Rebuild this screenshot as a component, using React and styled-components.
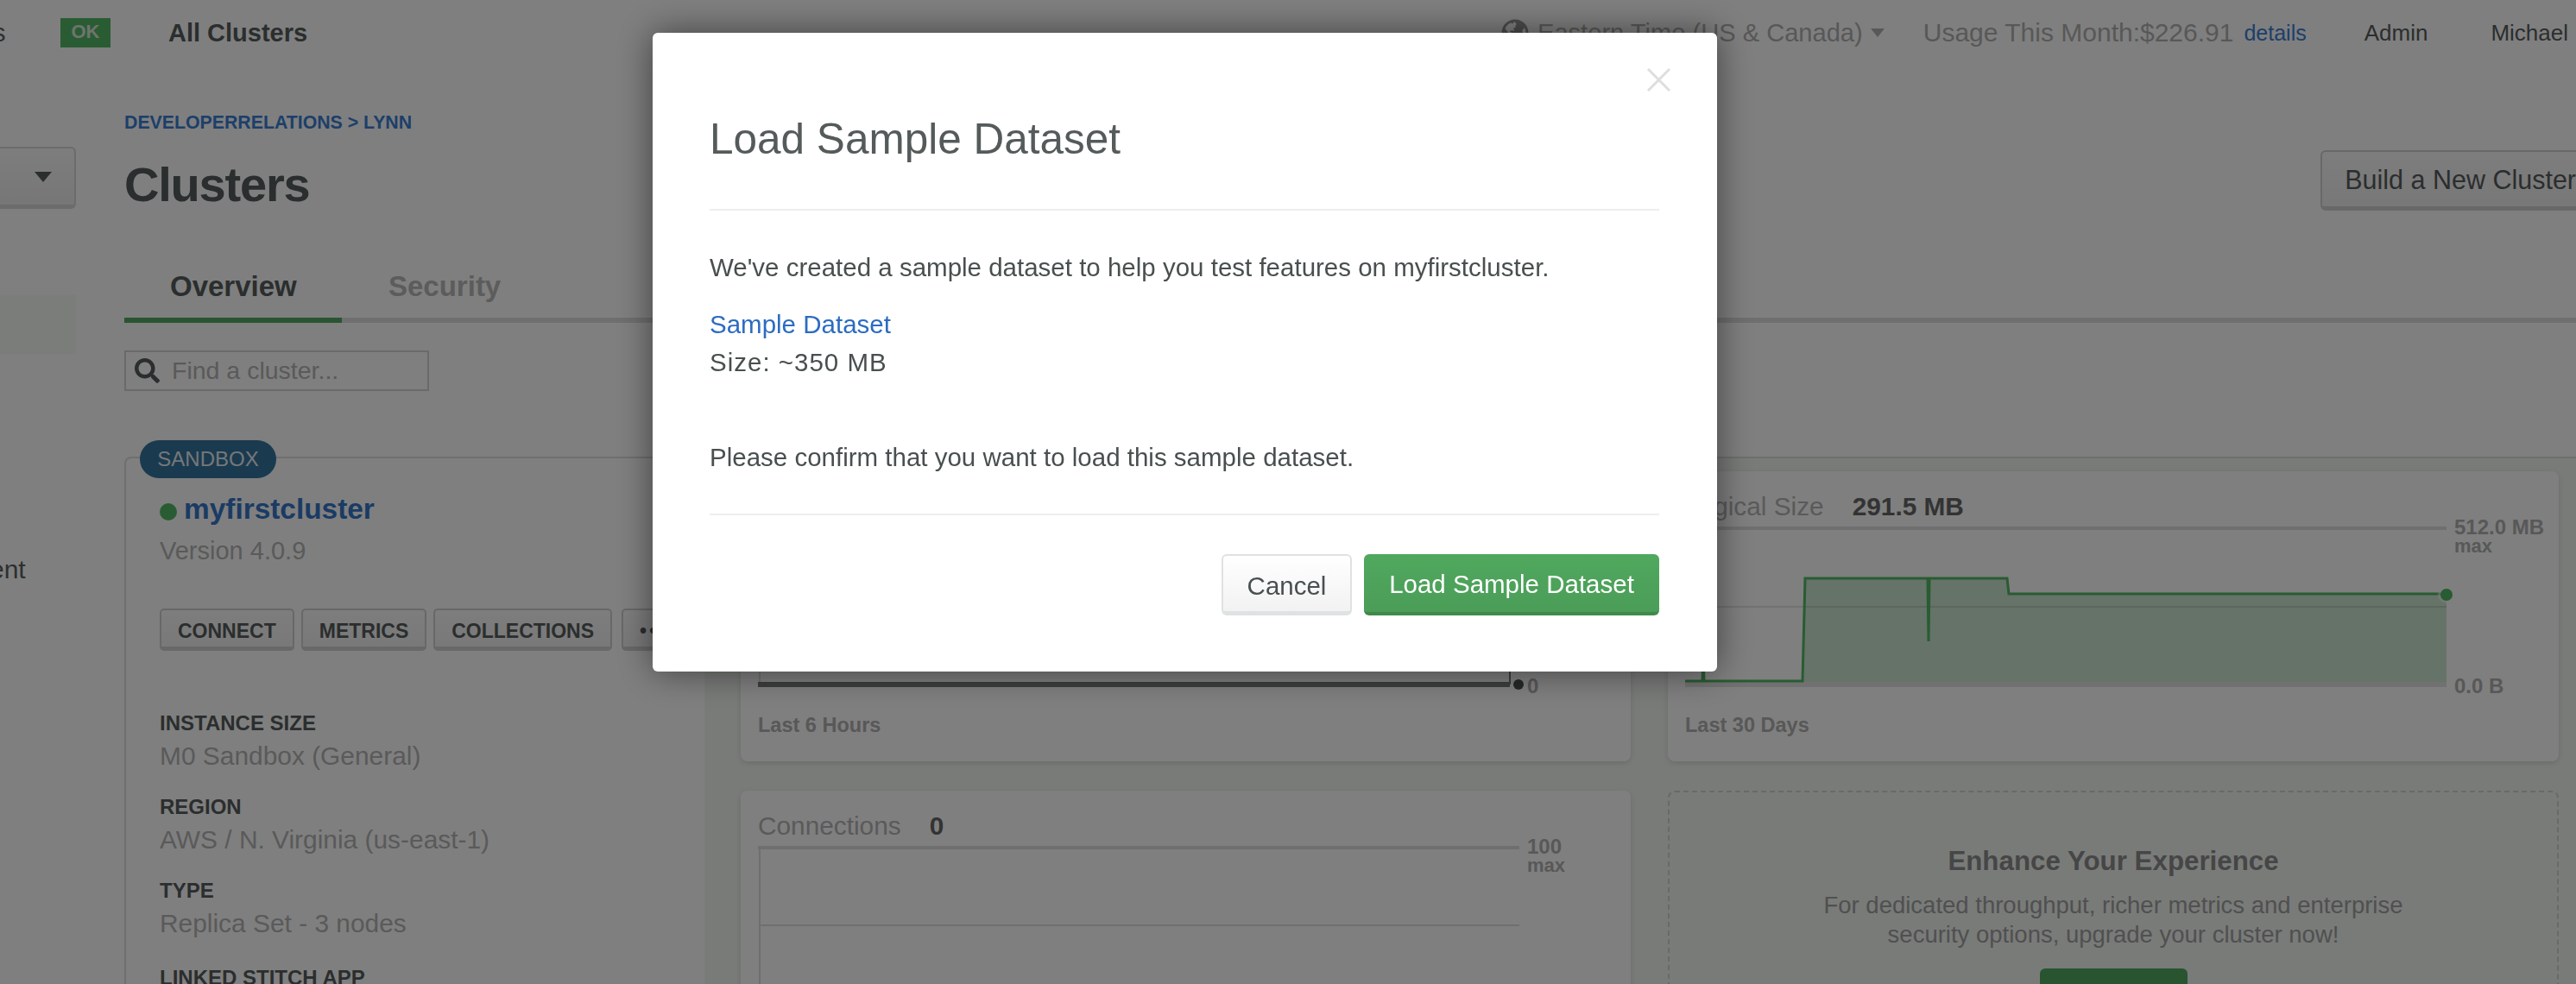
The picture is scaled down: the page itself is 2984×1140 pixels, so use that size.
import styled, { createGlobalStyle } from 'styled-components';
import { FaGlobeAmericas, FaSearch } from 'react-icons/fa';

const GlobalStyle = createGlobalStyle`
  html, body {
    margin: 0;
    background: #fff;
    font-family: "Liberation Sans", Arial, sans-serif;
    color: #5a6060;
  }
  * { box-sizing: border-box; }
`;

export default function App() {
  return (
    <Page>
      <GlobalStyle />

      <TopBar>
        <CutWord>s</CutWord>
        <StatusBadge>OK</StatusBadge>
        <ClusterLink>All Clusters</ClusterLink>
        <TopRight>
          <Globe><FaGlobeAmericas /></Globe>
          <TimeZone>Eastern Time (US &amp; Canada)</TimeZone>
          <SmallCaret />
          <Usage>Usage This Month:$226.91</Usage>
          <Details>details</Details>
          <UserLink $gap={67}>Admin</UserLink>
          <UserLink $gap={73}>Michael</UserLink>
        </TopRight>
      </TopBar>

      <Main>
        <Sidebar>
          <SideDropdown><Caret /></SideDropdown>
          <SideActive />
          <SideItem>ent</SideItem>
        </Sidebar>

        <Content>
          <Breadcrumb>DEVELOPERRELATIONS &gt; LYNN</Breadcrumb>
          <TitleRow>
            <Heading>Clusters</Heading>
            <BuildButton>Build a New Cluster</BuildButton>
          </TitleRow>

          <Tabs>
            <Tab $active>Overview</Tab>
            <Tab>Security</Tab>
          </Tabs>

          <SearchBox>
            <SearchIcon><FaSearch /></SearchIcon>
            <SearchText>Find a cluster...</SearchText>
          </SearchBox>

          <ClusterCard>
            <SandboxBadge>SANDBOX</SandboxBadge>
            <ClusterInfo>
              <ClusterName><StatusDot />myfirstcluster</ClusterName>
              <Version>Version 4.0.9</Version>
              <ActionRow>
                <ActionButton>CONNECT</ActionButton>
                <ActionButton>METRICS</ActionButton>
                <ActionButton>COLLECTIONS</ActionButton>
                <ActionButton $more>•••</ActionButton>
              </ActionRow>
              <InfoList>
                <InfoLabel>INSTANCE SIZE</InfoLabel>
                <InfoValue>M0 Sandbox (General)</InfoValue>
                <InfoLabel>REGION</InfoLabel>
                <InfoValue>AWS / N. Virginia (us-east-1)</InfoValue>
                <InfoLabel>TYPE</InfoLabel>
                <InfoValue $gap={31}>Replica Set - 3 nodes</InfoValue>
                <InfoLabel>LINKED STITCH APP</InfoLabel>
              </InfoList>
            </ClusterInfo>

            <MetricsPanel>
              <MetricCard label="Operations" value="0" top="100" unit="max" bottom="0" footer="Last 6 Hours">
                <EmptyChart closed />
              </MetricCard>
              <MetricCard label="Logical Size" value="291.5 MB" top="512.0 MB" unit="max" bottom="0.0 B" footer="Last 30 Days">
                <SizeChart />
              </MetricCard>
              <MetricCard label="Connections" value="0" top="100" unit="max">
                <EmptyChart />
              </MetricCard>
              <UpgradeCard>
                <UpgradeTitle>Enhance Your Experience</UpgradeTitle>
                <UpgradeText>
                  For dedicated throughput, richer metrics and enterprise
                  <br />
                  security options, upgrade your cluster now!
                </UpgradeText>
                <UpgradeButton>Upgrade</UpgradeButton>
              </UpgradeCard>
            </MetricsPanel>
          </ClusterCard>
        </Content>
      </Main>

      <Overlay>
        <Modal>
          <CloseIcon viewBox="0 0 27 27">
            <path d="M1 1 L26 26 M26 1 L1 26" />
          </CloseIcon>
          <ModalHeader>Load Sample Dataset</ModalHeader>
          <ModalBody>
            <ModalText>We've created a sample dataset to help you test features on myfirstcluster.</ModalText>
            <DatasetLink>Sample Dataset</DatasetLink>
            <SizeText>Size: ~350 MB</SizeText>
            <ConfirmText>Please confirm that you want to load this sample dataset.</ConfirmText>
          </ModalBody>
          <ModalFooter>
            <CancelButton>Cancel</CancelButton>
            <LoadButton>Load Sample Dataset</LoadButton>
          </ModalFooter>
        </Modal>
      </Overlay>
    </Page>
  );
}

function MetricCard({ label, value, top, unit, bottom, footer, children }) {
  return (
    <Card>
      <CardHeader>
        <CardLabel>{label}</CardLabel>
        <CardValue>{value}</CardValue>
      </CardHeader>
      <ChartRow>
        {children}
        <AxisLabels>
          <div>
            <div>{top}</div>
            <AxisUnit>{unit}</AxisUnit>
          </div>
          <div>{bottom}</div>
        </AxisLabels>
      </ChartRow>
      {footer && <CardFooter>{footer}</CardFooter>}
    </Card>
  );
}

function EmptyChart({ closed }) {
  return (
    <ChartSvg viewBox="0 0 882 186">
      <line x1="0" y1="2" x2="882" y2="2" stroke="#dedede" strokeWidth="4" />
      <line x1="2" y1="0" x2="2" y2="184" stroke="#dedede" strokeWidth="2" />
      <line x1="2" y1="92" x2="882" y2="92" stroke="#dedede" strokeWidth="2" />
      {closed && (
        <>
          <line x1="0" y1="183" x2="871" y2="183" stroke="#7a7e7e" strokeWidth="6" />
          <line x1="871" y1="0" x2="871" y2="183" stroke="#7a7e7e" strokeWidth="2" />
          <circle cx="881" cy="183" r="6" fill="#4c5252" />
        </>
      )}
    </ChartSvg>
  );
}

function SizeChart() {
  const line = '0,179 136,179 139,60 281,60 282,133 283,60 373,60 375,78 882,78';
  return (
    <ChartSvg viewBox="0 0 882 186">
      <line x1="0" y1="2" x2="882" y2="2" stroke="#dedede" strokeWidth="4" />
      <polygon points={`${line} 882,180 0,180`} fill="#cde6d0" />
      <line x1="0" y1="93" x2="882" y2="93" stroke="#000" strokeOpacity="0.1" strokeWidth="2" />
      <line x1="0" y1="183" x2="882" y2="183" stroke="#e2e2e2" strokeWidth="6" />
      <polyline points="20,179 21,150 22,179" fill="none" stroke="#50b864" strokeWidth="3" />
      <polyline points={line} fill="none" stroke="#50b864" strokeWidth="3" />
      <circle cx="882" cy="79" r="10" fill="#fff" opacity="0.5" />
      <circle cx="882" cy="79" r="7" fill="#50b864" />
    </ChartSvg>
  );
}

const Page = styled.div`
  width: 2984px;
  height: 1140px;
  overflow: hidden;
`;
const TopBar = styled.div`
  display: flex;
  align-items: center;
  height: 76px;
`;
const CutWord = styled.span`
  width: 78px;
  margin-left: -8px;
  font-size: 29px;
  flex: none;
`;
const StatusBadge = styled.span`
  flex: none;
  width: 58px;
  height: 34px;
  background: #54b866;
  color: #dde8dd;
  font-size: 22px;
  font-weight: 700;
  line-height: 32px;
  text-align: center;
`;
const ClusterLink = styled.span`
  margin-left: 67px;
  font-size: 29px;
  font-weight: 700;
  color: #565c5c;
`;
const TopRight = styled.div`
  display: flex;
  align-items: center;
  margin-left: auto;
  padding-right: 9px;
`;
const Globe = styled.span`
  display: flex;
  font-size: 32px;
  color: #999;
  margin-right: 10px;
`;
const TimeZone = styled.span`
  font-size: 29.1px;
  color: #b0b0b0;
`;
const SmallCaret = styled.span`
  width: 0;
  height: 0;
  margin-left: 9px;
  border-left: 8px solid transparent;
  border-right: 8px solid transparent;
  border-top: 10px solid #b0b0b0;
`;
const Usage = styled.span`
  margin-left: 45px;
  font-size: 30px;
  color: #b0b0b0;
`;
const Details = styled.span`
  margin-left: 12px;
  font-size: 25px;
  color: #3a7ed4;
`;
const UserLink = styled.span`
  margin-left: ${p => p.$gap}px;
  font-size: 26px;
  color: #565c5c;
`;

const Main = styled.div`
  display: flex;
`;
const Sidebar = styled.div`
  flex: none;
  width: 144px;
  padding-top: 94px;
`;
const SideDropdown = styled.div`
  display: flex;
  align-items: center;
  justify-content: flex-end;
  width: 88px;
  height: 72px;
  padding-right: 26px;
  background: linear-gradient(#fbfbfb, #eee);
  border: 2px solid #d8d8d8;
  border-left: none;
  border-bottom-width: 5px;
  border-radius: 0 6px 6px 0;
`;
const Caret = styled.span`
  width: 0;
  height: 0;
  border-left: 10px solid transparent;
  border-right: 10px solid transparent;
  border-top: 12px solid #565c5c;
`;
const SideActive = styled.div`
  width: 88px;
  height: 68px;
  margin-top: 100px;
  background: #f5faf5;
`;
const SideItem = styled.div`
  margin: 232px 0 0 -12px;
  font-size: 30px;
  line-height: 36px;
`;

const Content = styled.div`
  flex: none;
  width: 2840px;
`;
const Breadcrumb = styled.div`
  margin-top: 53px;
  font-size: 21.3px;
  line-height: 26px;
  font-weight: 700;
  color: #3a7ed4;
`;
const TitleRow = styled.div`
  display: flex;
  align-items: flex-start;
  justify-content: space-between;
  margin-top: 19px;
`;
const Heading = styled.h1`
  margin: 8px 0 0;
  font-size: 56px;
  line-height: 64px;
  font-weight: 700;
  letter-spacing: -1.2px;
  color: #565c5c;
`;
const BuildButton = styled.div`
  flex: none;
  height: 70px;
  margin-right: -28px;
  padding: 0 26px;
  background: linear-gradient(#fbfbfb, #f0f0f0);
  border: 2px solid #d0d0d0;
  border-bottom-width: 5px;
  border-radius: 6px;
  font-size: 30.5px;
  line-height: 64px;
  color: #565c5c;
`;
const Tabs = styled.div`
  display: flex;
  margin-top: 66px;
  border-bottom: 6px solid #dedede;
`;
const Tab = styled.div`
  width: ${p => (p.$active ? '252px' : 'auto')};
  padding: 0 0 16px ${p => (p.$active ? '53px' : '54px')};
  margin-bottom: -6px;
  font-size: 33px;
  line-height: 40px;
  font-weight: 700;
  color: ${p => (p.$active ? '#565c5c' : '#b8b8b8')};
  border-bottom: 6px solid ${p => (p.$active ? '#52a862' : 'transparent')};
`;
const SearchBox = styled.div`
  display: flex;
  align-items: center;
  width: 353px;
  height: 47px;
  margin-top: 32px;
  padding-left: 10px;
  border: 2px solid #d4d4d4;
`;
const SearchIcon = styled.span`
  display: flex;
  font-size: 29px;
  color: #565c5c;
`;
const SearchText = styled.span`
  margin-left: 14px;
  font-size: 28.5px;
  color: #b4b4b4;
`;

const ClusterCard = styled.div`
  position: relative;
  display: flex;
  height: 620px;
  margin-top: 76px;
  border-top: 2px solid #dedede;
  border-left: 2px solid #dedede;
  border-top-left-radius: 8px;
`;
const SandboxBadge = styled.div`
  position: absolute;
  top: -21px;
  left: 16px;
  width: 158px;
  height: 44px;
  border-radius: 22px;
  background: #34749f;
  color: #e8eef2;
  font-size: 24px;
  line-height: 44px;
  text-align: center;
`;
const ClusterInfo = styled.div`
  flex: none;
  width: 670px;
  padding: 39px 0 0 39px;
`;
const ClusterName = styled.div`
  display: flex;
  align-items: center;
  font-size: 33.4px;
  line-height: 40px;
  font-weight: 700;
  color: #3477c8;
`;
const StatusDot = styled.span`
  width: 20px;
  height: 20px;
  margin: 6px 8px 0 0;
  border-radius: 50%;
  background: #54b866;
`;
const Version = styled.div`
  margin-top: 11px;
  font-size: 29px;
  line-height: 34px;
  color: #b4b4b4;
`;
const ActionRow = styled.div`
  display: flex;
  gap: 8px;
  margin-top: 50px;
`;
const ActionButton = styled.div`
  flex: none;
  height: 49px;
  margin-left: ${p => (p.$more ? '3px' : '0')};
  padding: 0 19px;
  background: linear-gradient(#fbfbfb, #f2f2f2);
  border: 2px solid #d0d0d0;
  border-bottom-width: 5px;
  border-radius: 5px;
  font-size: 23px;
  line-height: 48px;
  font-weight: 700;
  letter-spacing: ${p => (p.$more ? '3px' : '0')};
  color: #565c5c;
`;
const InfoList = styled.div`
  margin-top: 70px;
`;
const InfoLabel = styled.div`
  margin-bottom: 6px;
  font-size: 24px;
  line-height: 28px;
  font-weight: 700;
  color: #565c5c;
`;
const InfoValue = styled.div`
  margin-bottom: ${p => p.$gap || 27}px;
  font-size: 29.9px;
  line-height: 36px;
  color: #b4b4b4;
`;

const MetricsPanel = styled.div`
  flex: 1;
  display: grid;
  grid-template-columns: 1031px 1032px;
  grid-template-rows: 336px 300px;
  gap: 34px 43px;
  padding: 15px 0 0 42px;
  background: #f2f6f2;
`;
const Card = styled.div`
  padding: 24px 20px 0;
  background: #fff;
  border-radius: 8px;
  box-shadow: 0 2px 6px rgba(0, 0, 0, 0.12);
`;
const CardHeader = styled.div`
  display: flex;
  gap: 33px;
  font-size: 29.8px;
  line-height: 34px;
`;
const CardLabel = styled.span`
  color: #b4b4b4;
`;
const CardValue = styled.span`
  font-weight: 700;
  color: #666;
`;
const ChartRow = styled.div`
  display: flex;
  margin-top: 6px;
`;
const ChartSvg = styled.svg`
  flex: none;
  display: block;
  width: 882px;
  height: 186px;
  overflow: visible;
`;
const AxisLabels = styled.div`
  display: flex;
  flex-direction: column;
  justify-content: space-between;
  margin: -12px -60px -12px 9px;
  font-size: 24px;
  line-height: 26px;
  font-weight: 700;
  color: #b0b0b0;
`;
const AxisUnit = styled.div`
  font-size: 22px;
  line-height: 18px;
`;
const CardFooter = styled.div`
  margin-top: 31px;
  font-size: 23.5px;
  line-height: 26px;
  font-weight: 700;
  color: #b0b0b0;
`;
const UpgradeCard = styled.div`
  padding-top: 60px;
  border: 2px dashed #d0d4d0;
  border-radius: 8px;
  text-align: center;
`;
const UpgradeTitle = styled.div`
  font-size: 31.3px;
  line-height: 40px;
  font-weight: 700;
  color: #8c8c8c;
`;
const UpgradeText = styled.div`
  margin-top: 14px;
  font-size: 27.5px;
  line-height: 34px;
  color: #a0a0a0;
`;
const UpgradeButton = styled.div`
  width: 171px;
  height: 60px;
  margin: 22px auto 0;
  background: #50aa60;
  border-radius: 6px;
  color: #fff;
  font-size: 28px;
  line-height: 60px;
`;

const Overlay = styled.div`
  position: fixed;
  inset: 0;
  padding: 38px 0 0 756px;
  background: rgba(0, 0, 0, 0.5);
`;
const Modal = styled.div`
  position: relative;
  width: 1233px;
  height: 740px;
  padding: 0 67px 0 66px;
  background: #fff;
  border-radius: 6px;
  box-shadow: 0 0 40px rgba(0, 0, 0, 0.5);
`;
const CloseIcon = styled.svg`
  position: absolute;
  top: 41px;
  right: 54px;
  width: 27px;
  height: 27px;
  fill: none;
  stroke: #dedede;
  stroke-width: 3;
`;
const ModalHeader = styled.div`
  height: 206px;
  padding-top: 91px;
  border-bottom: 2px solid #eeeeee;
  font-size: 49.5px;
  line-height: 64px;
  color: #555a5a;
`;
const ModalBody = styled.div`
  height: 353px;
  padding-top: 46px;
  border-bottom: 2px solid #eeeeee;
  font-size: 29.5px;
  line-height: 40px;
  color: #494f4f;
`;
const ModalText = styled.div``;
const SizeText = styled.div`
  letter-spacing: 1px;
`;
const DatasetLink = styled.div`
  margin-top: 26px;
  margin-bottom: 4px;
  color: #2c6cc0;
`;
const ConfirmText = styled.div`
  margin-top: 70px;
`;
const ModalFooter = styled.div`
  display: flex;
  justify-content: flex-end;
  gap: 14px;
  margin-top: 45px;
`;
const CancelButton = styled.div`
  width: 151px;
  height: 71px;
  background: linear-gradient(#ffffff, #f2f2f2);
  border: 2px solid #dfe2e2;
  border-bottom-width: 5px;
  border-radius: 6px;
  font-size: 29.5px;
  line-height: 70px;
  text-align: center;
  color: #494f4f;
`;
const LoadButton = styled.div`
  width: 342px;
  height: 71px;
  background: linear-gradient(#50a85e, #4b9d58);
  border-bottom: 4px solid #3f8a4b;
  border-radius: 6px;
  font-size: 29.5px;
  line-height: 70px;
  text-align: center;
  color: #fff;
`;
